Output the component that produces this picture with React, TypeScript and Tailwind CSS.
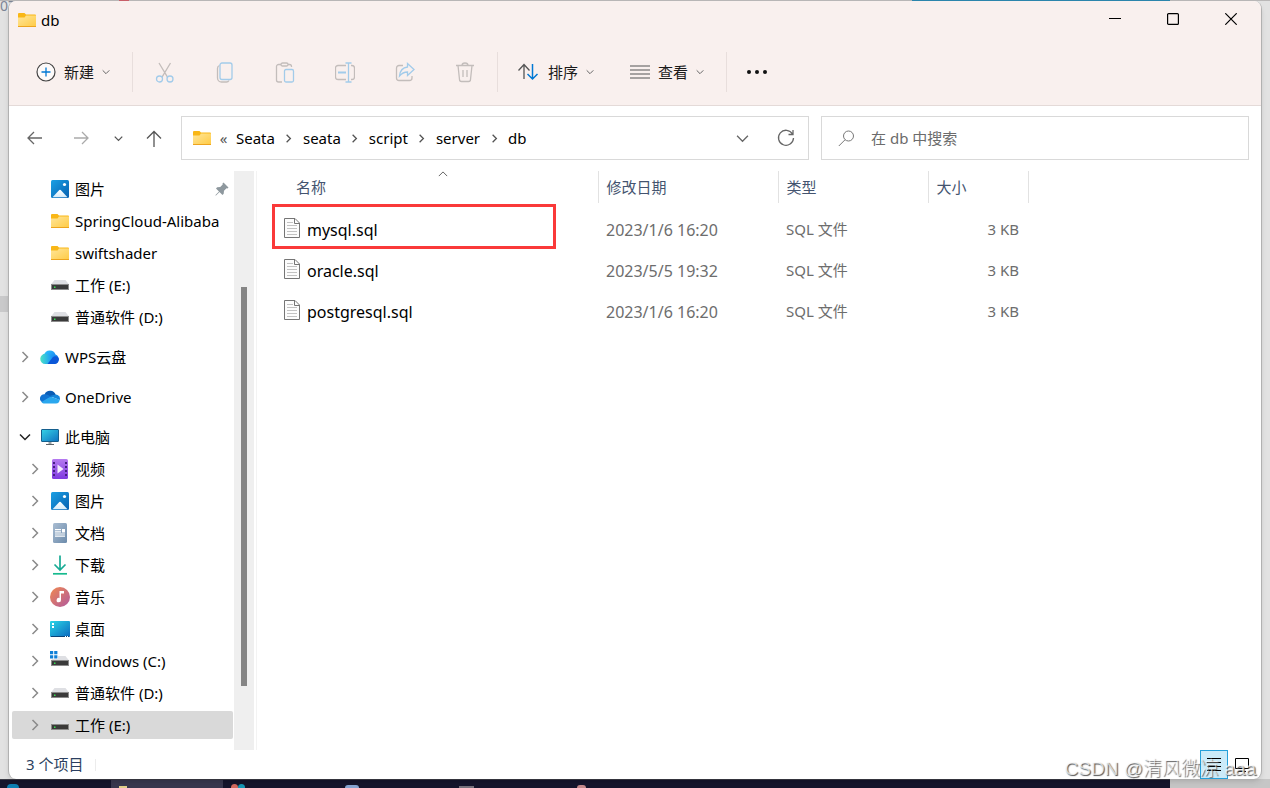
import React from "react";

interface TreeItem {
  label: string;
  icon: React.ReactNode;
  level: number;
  arrow?: "right" | "down";
  pinned?: boolean;
  selected?: boolean;
}

interface FileItem {
  name: string;
  date: string;
  type: string;
  size: string;
  marked?: boolean;
}

const GREY = "#c3bdbb";
const BLUE = "#a2cbea";

const FolderIcon = () => (
  <svg width="18" height="14" viewBox="0 0 18 14" className="shrink-0">
    <defs>
      <linearGradient id="folder" x1="0" y1="0" x2="1" y2="1">
        <stop offset="0" stopColor="#ffe69a" />
        <stop offset="1" stopColor="#ffcb45" />
      </linearGradient>
    </defs>
    <path d="M0 1a1 1 0 0 1 1-1h5.500l1.500 1.500H17a1 1 0 0 1 1 1V8H0z" fill="#f9b716" />
    <path d="M0 4.500h6.500L8 2.500h10V13.500H0z" fill="url(#folder)" />
    <path d="M0 13h18v1H0z" fill="#eda41e" />
  </svg>
);

const PictureIcon = () => (
  <svg width="18" height="18" viewBox="0 0 18 18">
    <defs>
      <linearGradient id="picture" x1="0" y1="0" x2="1" y2="1">
        <stop offset="0" stopColor="#1ba0e4" />
        <stop offset="1" stopColor="#0760b0" />
      </linearGradient>
      <linearGradient id="hill" x1="0" y1="0" x2="0" y2="1">
        <stop offset="0" stopColor="#fff" />
        <stop offset="1" stopColor="#d6ecfa" />
      </linearGradient>
    </defs>
    <rect width="18" height="18" rx="1.500" fill="url(#picture)" />
    <path d="M1.500 17.200 8.300 10a1 1 0 0 1 1.400 0l6.800 7.200z" fill="url(#hill)" />
    <circle cx="13.500" cy="4.500" r="1.600" fill="#fff" />
  </svg>
);

const DriveIcon = ({ system }: { system?: boolean }) => (
  <svg width="20" height="20" viewBox="0 0 20 20">
    <path d="M4.500 5h11l3.500 4.500H1z" fill="#dedfe3" />
    <path d="M1 9h18v6H1z" fill="#8b8b8b" />
    <path d="M2 10h16v4H2z" fill="#3a3a3a" />
    <path d="M4 11.500h1.500V13H4z" fill="#35e052" />
    {system && (
      <>
        <path d="M0 0h8v8H0z" fill="#fff" />
        <path d="M0 0h3.200v3.200H0zM4.200 0h3.200v3.200H4.200zM0 4.200h3.200v3.200H0zM4.200 4.200h3.200v3.200H4.200z" fill="#0f80d7" />
      </>
    )}
  </svg>
);

const WpsIcon = () => (
  <svg width="20" height="16" viewBox="0 0 20 16">
    <defs>
      <linearGradient id="wps-left" x1="0" y1="0" x2="1" y2="0">
        <stop offset="0" stopColor="#4ce3c4" />
        <stop offset="1" stopColor="#1494ff" />
      </linearGradient>
      <linearGradient id="wps-top" x1="0" y1="0" x2="1" y2="1">
        <stop offset="0" stopColor="#2fc7ff" />
        <stop offset="1" stopColor="#0a62e6" />
      </linearGradient>
    </defs>
    <path d="M4 6a6 6 0 0 1 11.500-.500A5 5 0 0 1 14.500 15H9z" fill="url(#wps-top)" />
    <path d="M5.500 4.800C8.500 4.500 10.500 7 12.500 9.500L8 15H5.200a5.100 5.100 0 0 1 .300-10.200z" fill="url(#wps-left)" />
    <path d="M12.500 8.500 7.500 15h7a4.800 4.800 0 0 0 4.500-5c-.500-2.800-4-4-6.500-1.500z" fill="#0b57d8" />
  </svg>
);

const OneDriveIcon = () => (
  <svg width="20" height="14" viewBox="0 0 20 14">
    <path d="M4.500 4.500A6 6 0 0 1 15.800 5L10 8z" fill="#0a5cb5" />
    <path d="M1.800 12A4.300 4.300 0 0 1 4.500 4.200c2.500-.300 4 .800 6.500 2.600L2.500 12.500z" fill="#1173d2" />
    <path d="M9.500 6 15.800 4.500A4.300 4.300 0 0 1 19.800 10z" fill="#1585da" />
    <path d="M1.500 12c2.500-1 6.500-4.500 9.500-5.200l8.700 3A4 4 0 0 1 16 13.500H4.500c-1.200 0-2.200-.500-3-1.500z" fill="#2aa7ee" />
  </svg>
);

const ComputerIcon = () => (
  <svg width="18" height="16" viewBox="0 0 18 16">
    <defs>
      <linearGradient id="screen" x1="0" y1="0" x2="1" y2="1">
        <stop offset="0" stopColor="#35d3e6" />
        <stop offset="1" stopColor="#0f70c0" />
      </linearGradient>
    </defs>
    <rect x=".5" y=".5" width="17" height="12" rx=".5" fill="url(#screen)" stroke="#155f8d" />
    <path d="M7.500 13h3v2h-3z" fill="#9aa1a6" />
    <path d="M5 15h8v1H5z" fill="#5c6368" />
  </svg>
);

const VideoIcon = () => (
  <svg width="16" height="20" viewBox="0 0 16 20">
    <defs>
      <linearGradient id="film" x1="0" y1="0" x2="0" y2="1">
        <stop offset="0" stopColor="#b57af0" />
        <stop offset="1" stopColor="#7f3be0" />
      </linearGradient>
    </defs>
    <rect width="16" height="20" rx="1.500" fill="url(#film)" />
    <path
      d="M1 3h2v2H1zM1 7h2v2H1zM1 11h2v2H1zM1 15h2v2H1zM13 3h2v2h-2zM13 7h2v2h-2zM13 11h2v2h-2zM13 15h2v2h-2z"
      fill="#461f83"
    />
    <path d="M5.500 5.500v9l6-4.500z" fill="#f4ecfd" />
  </svg>
);

const DocumentIcon = () => (
  <svg width="14" height="20" viewBox="0 0 14 20">
    <defs>
      <linearGradient id="document" x1="0" y1="0" x2="1" y2="1">
        <stop offset="0" stopColor="#a9bdd2" />
        <stop offset="1" stopColor="#6c8bab" />
      </linearGradient>
    </defs>
    <rect width="14" height="20" rx="1.500" fill="url(#document)" />
    <path d="M2 6h6v1.200H2zM2 8.200h6v1.200H2zM2 10.400h10v1.200H2zM2 12.600h10v1.200H2zM9 6h3v3.400H9z" fill="#fff" />
  </svg>
);

const DownloadIcon = () => (
  <svg width="16" height="20" viewBox="0 0 16 20" fill="none" strokeWidth="1.700">
    <path d="M8 .5v14M2.500 9.500 8 15l5.500-5.500" stroke="#18ab95" />
    <path d="M1 18.800h14" stroke="#16ba8e" />
  </svg>
);

const MusicIcon = () => (
  <svg width="20" height="20" viewBox="0 0 20 20">
    <defs>
      <linearGradient id="music" x1="0" y1="0" x2="1" y2="1">
        <stop offset="0" stopColor="#f1894f" />
        <stop offset="1" stopColor="#b0599f" />
      </linearGradient>
    </defs>
    <circle cx="10" cy="10" r="10" fill="url(#music)" />
    <path d="M9.500 4h4.500v2.500h-3V13a2.200 2.200 0 1 1-1.500-2z" fill="#fff" />
  </svg>
);

const DesktopIcon = () => (
  <svg width="20" height="16" viewBox="0 0 20 16">
    <defs>
      <linearGradient id="desktop" x1="0" y1="0" x2="1" y2="1">
        <stop offset="0" stopColor="#2ad6e6" />
        <stop offset="1" stopColor="#0b68bf" />
      </linearGradient>
    </defs>
    <rect width="20" height="16" rx="1" fill="url(#desktop)" />
    <path d="M1 15h18v1H1z" fill="#0a4377" />
    <path d="M2 2h2v2H2zM2 5h2v2H2z" fill="#fff" />
    <path d="M15 15h1v1h-1zM17 15h1v1h-1z" fill="#fff" />
  </svg>
);

const PinIcon = () => (
  <svg width="14" height="14" viewBox="0 0 14 14" className="mr-1 ml-auto shrink-0">
    <path d="M8.500.500 13.500 5.500l-1 1-1-.200-2.500 2.500-.300 3-1.200 1.200-3-3L1 13.500H.500V13L4 9.500l-3-3 1.200-1.200 3-.300L7.700 2.500l-.200-1z" fill="#8e989e" />
  </svg>
);

const FileIcon = () => (
  <svg width="16" height="20" viewBox="0 0 16 20" fill="none" className="shrink-0">
    <path d="M.5.5H11l4.500 4.500v14.500H.5z" fill="#fcfcfc" stroke="#757575" />
    <path d="M10.500.500V5.500h5" stroke="#757575" />
    <path d="M3 4.500h6M3 7.500h10M3 10.500h10M3 13.500h10M3 16.500h10" stroke="#c2c2c2" />
  </svg>
);

interface ChevronProps {
  dir: "right" | "down" | "up";
  size: number;
  color: string;
  width?: number;
}

const Chevron = ({ dir, size, color, width = 1.2 }: ChevronProps) => (
  <svg width={size} height={size} viewBox="0 0 12 12" fill="none" stroke={color} strokeWidth={(width * 12) / size} className="shrink-0">
    {dir === "right" && <path d="M3.500 1 8.500 6l-5 5" />}
    {dir === "down" && <path d="M1 3.500 6 8.500l5-5" />}
    {dir === "up" && <path d="M1 8.500 6 3.500l5 5" />}
  </svg>
);

const commands = [
  {
    label: "剪切",
    icon: (
      <>
        <path d="M4 1l8.500 14.200M15.500 1 7 15.200" stroke={GREY} />
        <circle cx="4.500" cy="17" r="3" stroke={BLUE} />
        <circle cx="15" cy="17" r="3" stroke={BLUE} />
      </>
    ),
  },
  {
    label: "复制",
    icon: (
      <>
        <path d="M4.500 3.500C3 4 2.500 5 2.500 6.500V16a4 4 0 0 0 4 4h5c1.200 0 2-.500 2.500-1.500" stroke={GREY} />
        <rect x="5" y="1" width="12" height="16.500" rx="2" stroke={BLUE} />
      </>
    ),
  },
  {
    label: "粘贴",
    icon: (
      <>
        <path d="M6 2.500H3.500A2 2 0 0 0 1.500 4.500v13.500a2 2 0 0 0 2 2H7M13 2.500h1.500a2 2 0 0 1 2 2V5" stroke={GREY} />
        <rect x="6" y="1" width="7" height="3" rx="1.500" stroke={GREY} />
        <rect x="9.500" y="7.500" width="9" height="12.500" rx="1.500" stroke={BLUE} />
      </>
    ),
  },
  {
    label: "重命名",
    icon: (
      <>
        <path d="M11 3.500H3a2.500 2.500 0 0 0-2.500 2.500v9A2.500 2.500 0 0 0 3 17.500h8M16 3.500h1A2.500 2.500 0 0 1 19.500 6v9a2.500 2.500 0 0 1-2.500 2.500h-1" stroke={GREY} />
        <path d="M10.500 1h6M10.500 20h6M13.500 1v19" stroke={BLUE} />
        <path d="M3 10.500h8" stroke={BLUE} strokeWidth="2" />
      </>
    ),
  },
  {
    label: "共享",
    icon: (
      <>
        <path d="M8 3.500H4A2.500 2.500 0 0 0 1.500 6v10A2.500 2.500 0 0 0 4 18.500h10.500A2.500 2.500 0 0 0 17 16v-2" stroke={GREY} />
        <path d="M12.500 1.500 19 7.500l-6.500 6v-3.500C9 10 7 11 4.500 14 5 9 7.500 5.500 12.500 5z" stroke={BLUE} />
      </>
    ),
  },
  {
    label: "删除",
    icon: (
      <>
        <path d="M1 3.500h18M7 3.500a3 2.500 0 0 1 6 0M3 3.500l1.500 14a2 2 0 0 0 2 2h7a2 2 0 0 0 2-2l1.500-14" stroke={GREY} />
        <path d="M8 8v7M12 8v7" stroke={GREY} />
      </>
    ),
  },
];

const tree: TreeItem[][] = [
  [
    { label: "图片", icon: <PictureIcon />, level: 1, pinned: true },
    { label: "SpringCloud-Alibaba", icon: <FolderIcon />, level: 1 },
    { label: "swiftshader", icon: <FolderIcon />, level: 1 },
    { label: "工作 (E:)", icon: <DriveIcon />, level: 1 },
    { label: "普通软件 (D:)", icon: <DriveIcon />, level: 1 },
  ],
  [{ label: "WPS云盘", icon: <WpsIcon />, level: 0, arrow: "right" }],
  [{ label: "OneDrive", icon: <OneDriveIcon />, level: 0, arrow: "right" }],
  [
    { label: "此电脑", icon: <ComputerIcon />, level: 0, arrow: "down" },
    { label: "视频", icon: <VideoIcon />, level: 1, arrow: "right" },
    { label: "图片", icon: <PictureIcon />, level: 1, arrow: "right" },
    { label: "文档", icon: <DocumentIcon />, level: 1, arrow: "right" },
    { label: "下载", icon: <DownloadIcon />, level: 1, arrow: "right" },
    { label: "音乐", icon: <MusicIcon />, level: 1, arrow: "right" },
    { label: "桌面", icon: <DesktopIcon />, level: 1, arrow: "right" },
    { label: "Windows (C:)", icon: <DriveIcon system />, level: 1, arrow: "right" },
    { label: "普通软件 (D:)", icon: <DriveIcon />, level: 1, arrow: "right" },
    { label: "工作 (E:)", icon: <DriveIcon />, level: 1, arrow: "right", selected: true },
  ],
];

const files: FileItem[] = [
  { name: "mysql.sql", date: "2023/1/6 16:20", type: "SQL 文件", size: "3 KB", marked: true },
  { name: "oracle.sql", date: "2023/5/5 19:32", type: "SQL 文件", size: "3 KB" },
  { name: "postgresql.sql", date: "2023/1/6 16:20", type: "SQL 文件", size: "3 KB" },
];

const path = ["Seata", "seata", "script", "server", "db"];

const TitleBar = () => (
  <div className="flex h-[38px] items-center">
    <div className="flex items-center gap-[5px] pl-[9px]">
      <FolderIcon />
      <h1 className="text-[15px]">db</h1>
    </div>
    <div className="mr-px ml-auto flex h-9 self-start">
      <button aria-label="最小化" className="flex w-[58px] items-center justify-center">
        <svg width="12" height="12" viewBox="0 0 12 12" stroke="#000">
          <path d="M0 5.500h12" />
        </svg>
      </button>
      <button aria-label="最大化" className="flex w-[58px] items-center justify-center">
        <svg width="12" height="12" viewBox="0 0 12 12" fill="none" stroke="#000" strokeWidth="1.200">
          <rect x=".6" y=".6" width="10.800" height="10.800" rx="1" />
        </svg>
      </button>
      <button aria-label="关闭" className="flex w-[58px] items-center justify-center">
        <svg width="12" height="12" viewBox="0 0 12 12" stroke="#000" strokeWidth="1.200">
          <path d="M.3.3l11.400 11.400M11.700.3.3 11.700" />
        </svg>
      </button>
    </div>
  </div>
);

const Separator = () => <div className="mx-[2px] h-10 w-px bg-[#e8dedc]" />;

const Toolbar = () => (
  <div className="flex h-[66px] items-center text-[15px] text-[#1a1a1a]">
    <button className="mr-5 ml-[27px] flex items-center gap-2">
      <svg width="20" height="20" viewBox="0 0 20 20" fill="none">
        <circle cx="10" cy="10" r="9" fill="#fdfaf9" stroke="#444" strokeWidth="1.200" />
        <path d="M10 5.500v9M5.500 10h9" stroke="#0078d4" strokeWidth="1.300" />
      </svg>
      <span>新建</span>
      <Chevron dir="down" size={8} color="#666" width={1} />
    </button>
    <Separator />
    {commands.map((command) => (
      <button key={command.label} aria-label={command.label} disabled className="flex h-10 w-[60px] items-center justify-center">
        <svg width="20" height="21" viewBox="0 0 20 21" fill="none" strokeWidth="1.300">
          {command.icon}
        </svg>
      </button>
    ))}
    <Separator />
    <button className="mr-4 ml-[18px] flex items-center gap-2">
      <svg width="22" height="18" viewBox="0 0 22 18" fill="none" strokeWidth="1.300">
        <path d="M6 16V2M.5 7.500 6 1.500l5.500 6" stroke="#555" />
        <path d="M14.500 1v15M9.500 11l5 5 5-5" stroke="#0078d4" strokeWidth="1.500" />
      </svg>
      <span>排序</span>
      <Chevron dir="down" size={8} color="#666" width={1} />
    </button>
    <button className="mx-5 flex items-center gap-2">
      <svg width="20" height="16" viewBox="0 0 20 16" stroke="#555" strokeWidth="1.200">
        <path d="M0 2h20M0 6h20M0 10h20M0 14h20" />
      </svg>
      <span>查看</span>
      <Chevron dir="down" size={8} color="#666" width={1} />
    </button>
    <Separator />
    <button aria-label="查看更多" className="flex w-[56px] items-center justify-center">
      <svg width="20" height="4" viewBox="0 0 20 4" fill="#111">
        <circle cx="2" cy="2" r="2" />
        <circle cx="10" cy="2" r="2" />
        <circle cx="18" cy="2" r="2" />
      </svg>
    </button>
  </div>
);

const AddressRow = () => (
  <div className="flex items-center py-[10px] pr-3 pl-[3px]">
    <button aria-label="后退" className="flex w-[46px] justify-center">
      <svg width="16" height="14" viewBox="0 0 16 14" fill="none" stroke="#666" strokeWidth="1.300">
        <path d="M15 7H1.500M7 1 1 7l6 6" />
      </svg>
    </button>
    <button aria-label="前进" className="flex w-[46px] justify-center">
      <svg width="16" height="14" viewBox="0 0 16 14" fill="none" stroke="#aaa" strokeWidth="1.300">
        <path d="M1 7h13.500M9 1l6 6-6 6" />
      </svg>
    </button>
    <button aria-label="最近浏览的位置" className="flex w-7 justify-center">
      <Chevron dir="down" size={9} color="#555" width={1.3} />
    </button>
    <button aria-label="向上" className="flex w-11 justify-center">
      <svg width="16" height="17" viewBox="0 0 16 17" fill="none" stroke="#555" strokeWidth="1.300">
        <path d="M8 17V1.500M1 8.500l7-7 7 7" />
      </svg>
    </button>
    <div className="ml-[5px] flex h-11 flex-1 items-center border border-[#d9d9d9] pl-[11px] text-[15px]">
      <FolderIcon />
      <span className="w-[25px] text-center text-[#555]">«</span>
      {path.map((part, index) => (
        <React.Fragment key={index}>
          {index > 0 && (
            <span className="flex w-7 justify-center">
              <Chevron dir="right" size={9} color="#555" width={1.3} />
            </span>
          )}
          <button>{part}</button>
        </React.Fragment>
      ))}
      <button aria-label="上一个位置" className="ml-auto flex h-full w-11 items-center justify-center">
        <Chevron dir="down" size={13} color="#666" width={1.3} />
      </button>
      <button aria-label="刷新" className="flex h-full w-11 items-center justify-center">
        <svg width="18" height="18" viewBox="0 0 18 18" fill="none" stroke="#666" strokeWidth="1.300">
          <path d="M15.500 5A7.500 7.500 0 1 0 16.500 9M16 1v4.500h-4.500" />
        </svg>
      </button>
    </div>
    <label className="ml-3 flex h-11 w-[428px] items-center gap-4 border border-[#d9d9d9] pl-4">
      <svg width="17" height="17" viewBox="0 0 17 17" fill="none" stroke="#777">
        <circle cx="10.500" cy="6" r="5" />
        <path d="M7 9.800.8 16" />
      </svg>
      <input
        type="text"
        aria-label="搜索"
        placeholder="在 db 中搜索"
        className="min-w-0 flex-1 text-[15px] outline-none placeholder:text-[#6b6b6b]"
      />
    </label>
  </div>
);

const Sidebar = () => (
  <div className="flex w-[248px] shrink-0 border-r border-[#f3f3f3]">
    <nav className="flex w-[225px] flex-col gap-2 pt-[2px]">
      {tree.map((group, groupIndex) => (
        <ul key={groupIndex}>
          {group.map((item, index) => (
            <li key={index} className="h-8 py-[2px] pr-px pl-[3px]">
              <button
                className={`flex h-7 w-full items-center gap-[5px] rounded-[2px] text-[15px] whitespace-nowrap ${
                  item.level === 1 ? "pl-[13px]" : "pl-[3px]"
                } ${item.selected ? "bg-[#d9d9d9]" : ""}`}
              >
                <span className="flex w-5 shrink-0 justify-center">
                  {item.arrow === "right" && <Chevron dir="right" size={12} color="#8a8a8a" width={1.5} />}
                  {item.arrow === "down" && <Chevron dir="down" size={12} color="#222" width={1.5} />}
                </span>
                <span className="flex w-5 shrink-0 justify-center">{item.icon}</span>
                <span>{item.label}</span>
                {item.pinned && <PinIcon />}
              </button>
            </li>
          ))}
        </ul>
      ))}
    </nav>
    <div className="flex w-5 flex-col items-center bg-[#efefef]">
      <div className="flex-[20]" />
      <div className="w-[6px] flex-[69] bg-[#858585]" />
      <div className="flex-[11]" />
    </div>
  </div>
);

const FileList = () => (
  <main className="min-w-0 flex-1">
    <table className="w-[771px] table-fixed text-left text-[15px]">
      <colgroup>
        <col className="w-[341px]" />
        <col className="w-[180px]" />
        <col className="w-[150px]" />
        <col className="w-[100px]" />
      </colgroup>
      <thead className="text-[#44546f]">
        <tr className="h-8">
          <th className="relative border-r border-[#e2e2e2] pl-[39px] font-normal">
            名称
            <span className="absolute -top-0.5 right-[150px]">
              <Chevron dir="up" size={10} color="#666" width={1} />
            </span>
          </th>
          <th className="border-r border-[#e2e2e2] pl-2 font-normal">修改日期</th>
          <th className="border-r border-[#e2e2e2] pl-2 font-normal">类型</th>
          <th className="border-r border-[#e2e2e2] pl-2 font-normal">大小</th>
        </tr>
      </thead>
      <tbody className="text-[#6d6d6d] before:block before:h-[6px] before:content-['']">
        {files.map((file) => (
          <tr key={file.name} className="h-[41px]">
            <td className="relative pl-[27px] text-base text-black">
              <div className="flex items-start gap-[7px]">
                <FileIcon />
                <span>{file.name}</span>
              </div>
              {file.marked && (
                <div className="absolute top-[-5px] left-[15px] h-[45px] w-[284px] border-3 border-[#fa3939]" />
              )}
            </td>
            <td className="pl-2 text-base">{file.date}</td>
            <td className="pl-2">{file.type}</td>
            <td className="pr-[9px] text-right">{file.size}</td>
          </tr>
        ))}
      </tbody>
    </table>
  </main>
);

const StatusBar = () => (
  <footer className="relative flex h-[29px] items-center pl-[17px] text-[#2b3f60]">
    <span className="text-[15px]">3 个项目</span>
    <div className="ml-3 h-3 w-px bg-[#ececec]" />
    <div className="mr-[5px] ml-auto flex h-full items-center">
      <button aria-label="详细信息" className="flex h-[29px] w-7 items-center justify-center border border-[#26a0da] bg-[#cbebf9]">
        <svg width="14" height="14" viewBox="0 0 14 14" stroke="#000">
          <path d="M0 .5h14M0 4.500h14M0 8.500h14M0 12.500h14" />
        </svg>
      </button>
      <button aria-label="大图标" className="flex h-[29px] w-7 items-center justify-center">
        <svg width="14" height="14" viewBox="0 0 14 14" fill="none" stroke="#000">
          <path d="M.5.5h13v10H.5zM3 13.500h8" />
        </svg>
      </button>
    </div>
    <span className="absolute right-[5px] bottom-0 font-['Liberation_Sans','Noto_Sans_CJK_SC',sans-serif] text-[19px] leading-5 font-light whitespace-nowrap text-[#ffffffb3] [text-shadow:1px_1px_1px_#555]">
      CSDN @清风微凉 aaa
    </span>
  </footer>
);

// The strip of the taskbar that shows below the window
const Taskbar = () => (
  <div className="flex h-[9px] shrink-0 items-end">
    <div className="flex h-full flex-1 items-end border-t border-[#3c3c46] bg-[#15152c]">
      <div className="flex w-[111px] justify-start pl-[7px]">
        <div className="h-1 w-3 rounded-t-sm bg-[#0d7fb3]" />
      </div>
      <div className="flex h-full w-[112px] items-end bg-[#38374e] pl-2">
        <div className="h-[2px] w-2 bg-[#e0cf8a]" />
      </div>
      <div className="flex w-[122px] pl-2">
        <div className="h-1 w-[7px] rounded-t-sm bg-[#d3695f]" />
        <div className="h-1 w-[7px] rounded-t-sm bg-[#1596b5]" />
      </div>
      <div className="h-[3px] w-[14px] rounded-t-sm bg-[#87a5d2]" />
      <div className="ml-[100px] h-[2px] w-[15px] bg-[#77727d]" />
      <div className="ml-[103px] h-[3px] w-[9px] rounded-t-sm bg-[#c68a8c]" />
    </div>
    <div className="h-full w-[100px] bg-[#c6c6c6]" />
  </div>
);

// Slivers of the page behind the window
const Backdrop = () => (
  <div className="absolute inset-0">
    <div className="flex h-px bg-[#b9b7b7]">
      <div className="ml-[119px] w-[10px] bg-[#c9606a]" />
      <div className="mr-[100px] ml-auto w-[258px] bg-[#2c86ad]" />
    </div>
    <span className="block text-sm leading-[10px] text-[#7d8596]">07</span>
    <div className="mt-[285px] h-4 w-2 bg-[#c9c9ca]" />
  </div>
);

const App: React.FC = () => (
  <div className="relative flex min-h-screen flex-col bg-[#e2e2e2] font-['Noto_Sans','Noto_Sans_CJK_SC',sans-serif] text-black">
    <Backdrop />
    <div className="relative mx-2 mt-px flex flex-1 flex-col overflow-hidden rounded-lg border-x border-[#b1b1b1] bg-white shadow-md">
      <header className="border-b border-[#e4dad8] bg-[#f9f0ee]">
        <TitleBar />
        <Toolbar />
      </header>
      <AddressRow />
      <div className="flex flex-1 pt-px">
        <Sidebar />
        <FileList />
      </div>
      <StatusBar />
    </div>
    <Taskbar />
  </div>
);

export default App;
